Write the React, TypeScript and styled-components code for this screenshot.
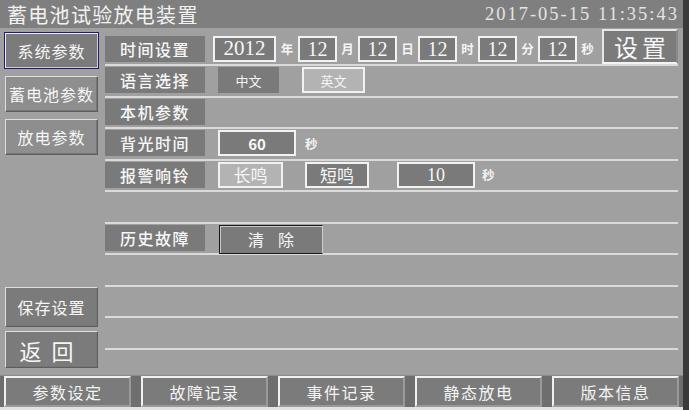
import styled, { createGlobalStyle } from 'styled-components'

const GlobalStyle = createGlobalStyle`
  html, body {
    margin: 0;
    padding: 0;
    background: #e6e6e6;
  }
  * {
    box-sizing: border-box;
  }
`

const CJK = `"Noto Sans CJK SC", "Noto Sans", sans-serif`
const SERIF = `"Liberation Serif", "Noto Sans CJK SC", serif`

const Screen = styled.div`
  width: 689px;
  height: 410px;
  display: flex;
  flex-direction: column;
  background: #a0a0a0;
  border-right: 6px solid #3a3a3a;
  overflow: hidden;
  color: #f4f4f4;
  font-family: ${CJK};
`

const TitleBar = styled.div`
  height: 28px;
  flex: none;
  display: flex;
  align-items: center;
  justify-content: space-between;
  padding: 0 4px 0 7px;
  background: #7f7f7f;
`

const Title = styled.div`
  font-size: 20px;
  letter-spacing: 1.3px;
  color: #f2f2f2;
`

const Clock = styled.div`
  font-family: ${SERIF};
  font-size: 18.5px;
  color: #e4e4e4;
  letter-spacing: 2px;
`

const Main = styled.div`
  flex: 1;
  display: flex;
  min-height: 0;
`

const Sidebar = styled.div`
  width: 105px;
  flex: none;
  display: flex;
  flex-direction: column;
  justify-content: space-between;
  padding: 4px 6px 7px 4px;
`

const SideGroup = styled.div<{ tight?: boolean }>`
  display: flex;
  flex-direction: column;
  gap: ${({ tight }) => (tight ? 4 : 7)}px;
`

const SideButton = styled.div<{ active?: boolean; dark?: boolean; h: number; size?: number }>`
  height: ${({ h }) => h}px;
  display: flex;
  align-items: center;
  justify-content: center;
  white-space: nowrap;
  font-size: ${({ size }) => size ?? 16}px;
  letter-spacing: ${({ size }) => ((size ?? 16) > 18 ? 10 : 1)}px;
  margin-left: ${({ active }) => (active ? 0 : 1)}px;
  width: ${({ active }) => (active ? 95 : 93)}px;
  background: ${({ active, dark }) => (active || dark ? '#7b7b7b' : '#8e8e8e')};
  border: 1px solid;
  border-color: ${({ active }) =>
    active ? '#1c1c78' : '#dedede #5e5e5e #5e5e5e #dedede'};
  box-shadow: ${({ active }) =>
    active ? 'inset 1px 1px 0 #eeeeee, inset -1px -1px 0 #cfcfcf' : 'inset -1px -1px 0 #767676'};
  color: #f6f6f6;
`

const Content = styled.div`
  width: 573px;
  flex: none;
  padding-top: 6.5px;
  display: flex;
  flex-direction: column;
`

const Row = styled.div`
  height: 31.5px;
  flex: none;
  display: flex;
  align-items: flex-start;
  padding-top: 1px;
  border-bottom: 2px solid #dadada;
`

const Label = styled.div`
  width: 100px;
  height: 26px;
  flex: none;
  display: flex;
  align-items: center;
  justify-content: center;
  background: #7a7a7a;
  font-size: 16px;
  font-weight: 500;
  letter-spacing: 1.5px;
  color: #f6f6f6;
`

const ValueBox = styled.div<{ w: number; ml?: number; light?: boolean; plain?: boolean; serif?: boolean; size?: number; bold?: boolean }>`
  width: ${({ w }) => w}px;
  height: 26px;
  flex: none;
  margin-left: ${({ ml }) => ml ?? 0}px;
  display: flex;
  align-items: center;
  justify-content: center;
  background: ${({ light }) => (light ? '#b3b3b3' : '#7a7a7a')};
  border: 2px solid ${({ plain }) => (plain ? '#7a7a7a' : '#f2f2f2')};
  font-family: ${({ serif }) => (serif ? SERIF : CJK)};
  font-size: ${({ size }) => size ?? 16}px;
  font-weight: ${({ bold }) => (bold ? 700 : 400)};
  color: #f6f6f6;
  line-height: 1;
`

const Unit = styled.div<{ w?: number; ml?: number; left?: boolean }>`
  width: ${({ w }) => w ?? 21}px;
  margin-left: ${({ ml }) => ml ?? 0}px;
  height: 26px;
  flex: none;
  display: flex;
  align-items: center;
  justify-content: ${({ left }) => (left ? 'flex-start' : 'center')};
  font-size: 12.5px;
  font-weight: 700;
  color: #f4f4f4;
`

const SetButton = styled.div`
  width: 76px;
  height: 35px;
  margin-top: -7px;
  margin-left: 4px;
  flex: none;
  display: flex;
  align-items: center;
  justify-content: center;
  background: #7b7b7b;
  border: 2px solid;
  border-color: #e6e6e6 #8a8a8a #f4f4f4 #e6e6e6;
  font-size: 24px;
  letter-spacing: 4px;
  padding-left: 4px;
  color: #f6f6f6;
`

const ClearButton = styled.div`
  width: 104px;
  height: 29px;
  margin-left: 14px;
  flex: none;
  display: flex;
  align-items: center;
  justify-content: center;
  background: #7a7a7a;
  border: 1px solid;
  border-color: #1a1a1a #cfcfcf #1a1a1a #1a1a1a;
  box-shadow: inset 1px 1px 0 #c8c8c8;
  font-size: 16px;
  letter-spacing: 14px;
  padding-left: 14px;
  color: #f6f6f6;
`

const TabBar = styled.div`
  height: 32px;
  flex: none;
  display: flex;
  gap: 10px;
  padding: 0 4px;
  background: #6e6e6e;
  border-top: 1px solid #8a8a8a;
`

const Tab = styled.div`
  width: 127px;
  flex: none;
  display: flex;
  align-items: center;
  justify-content: center;
  background: #7b7b7b;
  border: 2px solid;
  border-color: #f0f0f0 #9a9a9a #9a9a9a #f0f0f0;
  font-size: 16px;
  letter-spacing: 1.5px;
  color: #f4f4f4;
`

const BottomStrip = styled.div`
  height: 3px;
  flex: none;
  background: #e2e2e2;
`

const tabs = ['参数设定', '故障记录', '事件记录', '静态放电', '版本信息']
const timeParts = ['月', '日', '时', '分', '秒']

export default function App() {
  return (
    <>
      <GlobalStyle />
      <Screen>
        <TitleBar>
          <Title>蓄电池试验放电装置</Title>
          <Clock>2017-05-15 11:35:43</Clock>
        </TitleBar>
        <Main>
          <Sidebar>
            <SideGroup>
              <SideButton active h={37}>系统参数</SideButton>
              <SideButton h={36}>蓄电池参数</SideButton>
              <SideButton h={36}>放电参数</SideButton>
            </SideGroup>
            <SideGroup tight>
              <SideButton dark h={40}>保存设置</SideButton>
              <SideButton dark h={37} size={22}>返回</SideButton>
            </SideGroup>
          </Sidebar>
          <Content>
            <Row>
              <Label>时间设置</Label>
              <ValueBox w={63} ml={8} serif size={21}>2012</ValueBox>
              <Unit w={22}>年</Unit>
              {timeParts.map((u) => (
                <span key={u} style={{ display: 'contents' }}>
                  <ValueBox w={39} serif size={20}>12</ValueBox>
                  <Unit>{u}</Unit>
                </span>
              ))}
              <SetButton>设置</SetButton>
            </Row>
            <Row>
              <Label>语言选择</Label>
              <ValueBox w={61} ml={13} plain size={13}>中文</ValueBox>
              <ValueBox w={63} ml={23} light size={13}>英文</ValueBox>
            </Row>
            <Row>
              <Label>本机参数</Label>
            </Row>
            <Row>
              <Label>背光时间</Label>
              <ValueBox w={78} ml={13} size={15} bold>60</ValueBox>
              <Unit w={20} ml={9} left>秒</Unit>
            </Row>
            <Row>
              <Label>报警响铃</Label>
              <ValueBox w={65} ml={13} light size={17}>长鸣</ValueBox>
              <ValueBox w={64} ml={22} size={17}>短鸣</ValueBox>
              <ValueBox w={78} ml={28} serif size={18}>10</ValueBox>
              <Unit w={20} ml={7} left>秒</Unit>
            </Row>
            <Row />
            <Row>
              <Label>历史故障</Label>
              <ClearButton>清除</ClearButton>
            </Row>
            <Row />
            <Row />
            <Row />
          </Content>
        </Main>
        <TabBar>
          {tabs.map((t) => (
            <Tab key={t}>{t}</Tab>
          ))}
        </TabBar>
        <BottomStrip />
      </Screen>
    </>
  )
}
